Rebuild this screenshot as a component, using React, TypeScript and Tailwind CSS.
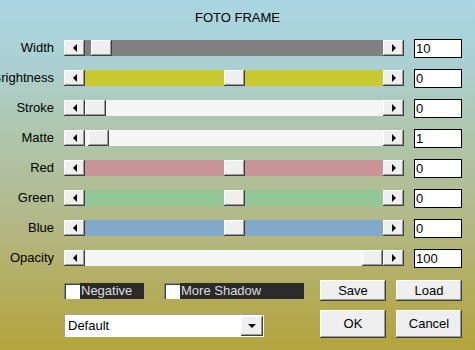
import React from 'react';

type SliderRow = {
  label: string;
  value: string;
  track: string;
  offset: number;
};

const rows: SliderRow[] = [
  { label: 'Width', value: '10', track: 'bg-[#808080]', offset: 6 },
  { label: 'Brightness', value: '0', track: 'bg-[#c9c931]', offset: 139 },
  { label: 'Stroke', value: '0', track: 'bg-[#f5f5f5]', offset: 0 },
  { label: 'Matte', value: '1', track: 'bg-[#f5f5f5]', offset: 3 },
  { label: 'Red', value: '0', track: 'bg-[#c89497]', offset: 139 },
  { label: 'Green', value: '0', track: 'bg-[#94c796]', offset: 139 },
  { label: 'Blue', value: '0', track: 'bg-[#80a9c9]', offset: 139 },
  { label: 'Opacity', value: '100', track: 'bg-[#f5f5f5]', offset: 277 }
];

const bevel =
  'bg-[#efefef] shadow-[inset_-1px_-1px_#404040,inset_1px_1px_#ffffff,inset_-2px_-2px_#9a9a9a]';

const Arrow: React.FC<{ dir: 'left' | 'right' | 'down' }> = ({ dir }) => {
  const points =
    dir === 'left' ? '4,0 4,8 0,4' : dir === 'right' ? '0,0 0,8 4,4' : '0,0 8,0 4,4';
  const w = dir === 'down' ? 8 : 4;
  const h = dir === 'down' ? 4 : 8;
  return (
    <svg width={w} height={h} viewBox={`0 0 ${w} ${h}`}>
      <polygon points={points} fill="#000" />
    </svg>
  );
};

const ScrollBar: React.FC<{ track: string; offset: number }> = ({ track, offset }) => (
  <div className="flex w-[340px] h-[16px] shrink-0">
    <div className={`w-[21px] h-full flex items-center justify-center ${bevel}`}>
      <Arrow dir="left" />
    </div>
    <div className={`flex-1 flex h-full ${track}`}>
      <div style={{ width: offset }} className="h-full shrink-0" />
      <div className={`w-[21px] h-full shrink-0 ${bevel}`} />
    </div>
    <div className={`w-[21px] h-full flex items-center justify-center ${bevel}`}>
      <Arrow dir="right" />
    </div>
  </div>
);

const Check: React.FC<{ label: string; width: string }> = ({ label, width }) => (
  <div className="flex items-center h-[16px]">
    <div className="w-[16px] h-[16px] bg-white border-t border-l border-[#808080] border-b-white border-r-white shadow-[inset_1px_1px_#404040]" />
    <div className={`${width} h-[16px] bg-[#2b2b2b] text-[#dcdcdc] leading-[16px] pl-[1px]`}>{label}</div>
  </div>
);

const Button: React.FC<{ label: string; h: string }> = ({ label, h }) => (
  <div className={`w-[66px] ${h} flex items-center justify-center text-black ${bevel}`}>{label}</div>
);

export default function App() {
  return (
    <div
      className="w-[475px] h-[350px] overflow-hidden text-[13px] text-black bg-[linear-gradient(180deg,#a9d6e2_0%,#abd0d2_18%,#afc5a9_40%,#b2b98a_62%,#b3ad5e_82%,#b4a43d_100%)]"
      style={{ fontFamily: '"Liberation Sans", Arial, sans-serif' }}
    >
      <div className="pt-[10px] h-[26px] leading-[16px] text-center pl-[0px]">FOTO FRAME</div>

      <div className="mt-[14px] flex flex-col gap-[14px]">
        {rows.map((row) => (
          <div key={row.label} className="flex items-center h-[16px]">
            <div className="w-[54px] shrink-0 flex justify-end overflow-hidden whitespace-nowrap leading-[16px]">
              <span className="shrink-0">{row.label}</span>
            </div>
            <div className="w-[10px] shrink-0" />
            <ScrollBar track={row.track} offset={row.offset} />
            <div className="ml-[10px] w-[48px] h-[19px] shrink-0 bg-white border border-black leading-[17px] pl-[1px]">
              {row.value}
            </div>
          </div>
        ))}
      </div>

      <div className="mt-[14px] pl-[64px] flex">
        <div className="w-[256px] flex flex-col">
          <div className="h-[21px] flex items-center gap-[20px]">
            <Check label="Negative" width="w-[64px]" />
            <Check label="More Shadow" width="w-[124px]" />
          </div>
          <div className="mt-[13px] w-[200px] h-[23px] flex items-center bg-white border-t border-l border-[#a0a0a0] border-b-[#e8e8e8] border-r-[#e8e8e8]">
            <div className="flex-1 pl-[3px] leading-[16px]">Default</div>
            <div className={`w-[22px] h-[20px] mr-[1px] flex items-center justify-center ${bevel}`}>
              <Arrow dir="down" />
            </div>
          </div>
        </div>
        <div className="grid grid-cols-[66px_66px] gap-x-[10px] gap-y-[9px]">
          <Button label="Save" h="h-[21px]" />
          <Button label="Load" h="h-[21px]" />
          <Button label="OK" h="h-[28px]" />
          <Button label="Cancel" h="h-[28px]" />
        </div>
      </div>
    </div>
  );
}
